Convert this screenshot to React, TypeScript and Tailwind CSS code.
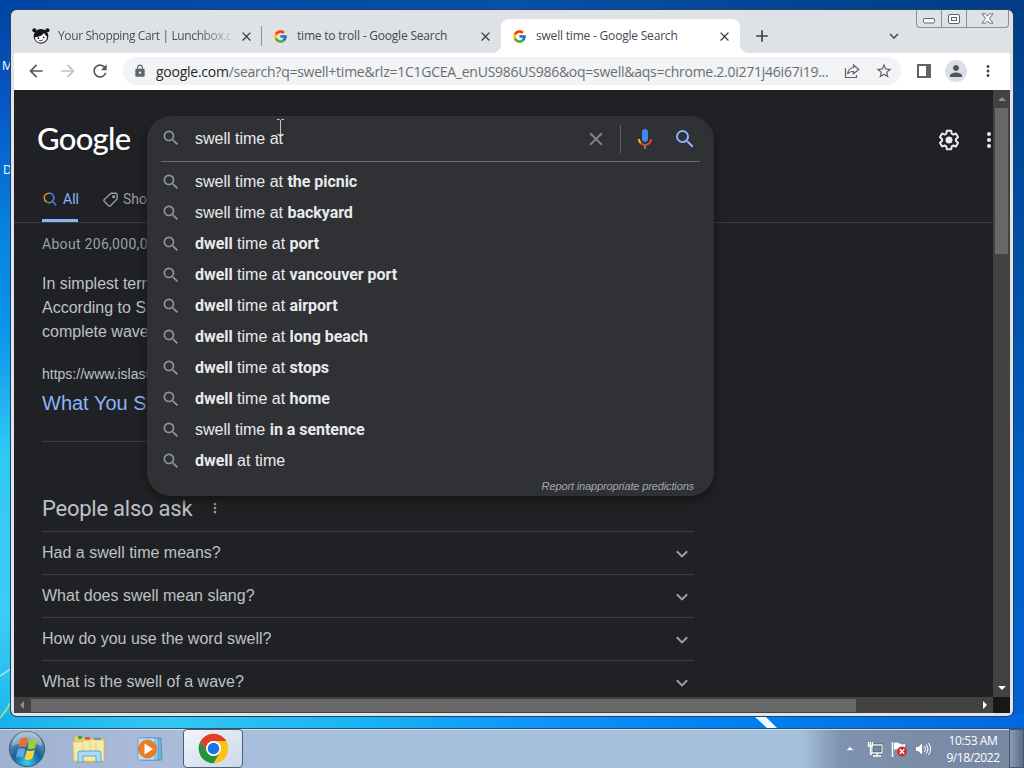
import type { ReactNode } from "react";
import { FcGoogle } from "react-icons/fc";
import {
  MdAdd,
  MdArrowBack,
  MdArrowForward,
  MdClose,
  MdKeyboardArrowDown,
  MdLock,
  MdMoreVert,
  MdPerson,
  MdRefresh,
  MdSearch,
  MdStarBorder,
} from "react-icons/md";

const suggestions: ReactNode[] = [
  <>swell time at <B>the picnic</B></>,
  <>swell time at <B>backyard</B></>,
  <><B>dwell</B> time at <B>port</B></>,
  <><B>dwell</B> time at <B>vancouver port</B></>,
  <><B>dwell</B> time at <B>airport</B></>,
  <><B>dwell</B> time at <B>long beach</B></>,
  <><B>dwell</B> time at <B>stops</B></>,
  <><B>dwell</B> time at <B>home</B></>,
  <>swell time <B>in a sentence</B></>,
  <><B>dwell</B> at time</>,
];

const questions = [
  "Had a swell time means?",
  "What does swell mean slang?",
  "How do you use the word swell?",
  "What is the swell of a wave?",
];

function B({ children }: { children: ReactNode }) {
  return <b className="font-['Roboto',sans-serif] font-bold tracking-[-0.04px]">{children}</b>;
}

function LunchboxIcon() {
  return (
    <svg viewBox="0 0 18 16" className="h-4 w-[18px] shrink-0">
      <circle cx="2.4" cy="2.3" r="2.1" fill="#161616" />
      <circle cx="15.4" cy="2.3" r="2.1" fill="#161616" />
      <circle cx="9" cy="8.4" r="7.3" fill="#161616" />
      <path d="M3 9.200c4.200-.2 7.200-1.700 9-4.200 1 1.700 2.200 2.800 3 3.600.2 3.400-2.300 6-6 6-3.400 0-6-2.100-6-5.400z" fill="#fff" />
      <circle cx="6.300" cy="10.200" r=".9" fill="#161616" />
      <circle cx="11.800" cy="9.300" r=".9" fill="#161616" />
      <path d="M7 12.300q2.500 1 4.300-.6" fill="none" stroke="#161616" strokeWidth=".8" />
    </svg>
  );
}

function Tab({ icon, title, active }: { icon: ReactNode; title: ReactNode; active?: boolean }) {
  return (
    <div
      className={
        active
          ? "relative flex h-[34px] w-[239px] items-center rounded-t-lg bg-white pl-[10px] pr-2"
          : "relative flex h-[34px] w-[239px] items-center pl-[10px] pr-2"
      }
    >
      {active && (
        <>
          <span className="absolute -left-2 bottom-0 size-2 bg-[radial-gradient(circle_at_0_0,transparent_7.5px,#fff_8px)]" />
          <span className="absolute -right-2 bottom-0 size-2 bg-[radial-gradient(circle_at_100%_0,transparent_7.5px,#fff_8px)]" />
        </>
      )}
      <span className="flex w-4 shrink-0 justify-center">{icon}</span>
      <span className="ml-[9px] whitespace-nowrap text-xs tracking-[-0.2px] text-[#45494d]">{title}</span>
      <MdClose className="ml-auto size-[15px] shrink-0 text-[#3c4043]" />
    </div>
  );
}

function CaptionButtons() {
  return (
    <div className="absolute right-[4px] top-0 flex h-[18px] w-[93px] rounded-b-[4px] border border-t-0 border-[#8b8f96] text-[#5d6168]">
      <div className="flex w-[25px] items-center justify-center border-r border-[#8b8f96]">
        <svg viewBox="0 0 12 6" className="mt-1 h-[6px] w-3">
          <rect x=".5" y=".5" width="11" height="4.500" rx="1.500" fill="#fff" stroke="currentColor" />
        </svg>
      </div>
      <div className="flex w-[25px] items-center justify-center border-r border-[#8b8f96]">
        <svg viewBox="0 0 12 10" className="h-[10px] w-3">
          <rect x=".5" y=".5" width="11" height="9" rx="1.500" fill="#fff" stroke="currentColor" />
          <rect x="3.500" y="3.500" width="5" height="3" fill="none" stroke="currentColor" />
        </svg>
      </div>
      <div className="flex flex-1 items-center justify-center">
        <svg viewBox="0 0 13 11" className="h-[11px] w-[13px]">
          <path d="M1 .8h3.500l2 2.300 2-2.300H12L8.400 5.500 12 10.200H8.500l-2-2.300-2 2.300H1l3.600-4.700z" fill="#fff" stroke="currentColor" strokeWidth=".9" />
        </svg>
      </div>
    </div>
  );
}

function TabStrip() {
  return (
    <div className="relative flex h-[43px] shrink-0 items-end rounded-t-md bg-[#dee1e6] pl-3">
      <Tab
        icon={<LunchboxIcon />}
        title={
          <span className="bg-linear-to-r from-[#45494d] from-80% to-[#c3c6cb] bg-clip-text tracking-[-0.38px] text-transparent">
            Your Shopping Cart | Lunchbox.c
          </span>
        }
      />
      <span className="mb-[7px] -ml-px h-5 w-px bg-[#8e9196]" />
      <Tab icon={<FcGoogle size={15} />} title="time to troll - Google Search" />
      <Tab icon={<FcGoogle size={15} />} title="swell time - Google Search" active />
      <MdAdd className="mb-[7px] ml-3 size-5 text-[#3c4043]" />
      <MdKeyboardArrowDown className="mb-[8px] ml-auto mr-[110px] size-[18px] text-[#45494d]" />
      <CaptionButtons />
    </div>
  );
}

function Toolbar() {
  return (
    <div className="mx-[3px] flex h-[37px] shrink-0 items-center bg-white pb-px pl-3 text-[#5f6368]">
      <MdArrowBack className="size-5 text-[#55595e]" />
      <MdArrowForward className="ml-3 size-5 text-[#c0c2c5]" />
      <MdRefresh className="ml-3 size-5 text-[#55595e]" />
      <div className="ml-[13px] flex h-7 w-[778px] items-center rounded-full bg-[#f1f3f4] pl-[10px]">
        <MdLock className="size-[14px]" />
        <span className="ml-[9px] w-[674px] whitespace-nowrap text-[14px] tracking-[-0.255px] text-[#6a6e73]">
          <span className="text-[#26282b]">google.com</span>
          /search?q=swell+time&amp;rlz=1C1GCEA_enUS986US986&amp;oq=swell&amp;aqs=chrome.2.0i271j46i67i19...
        </span>
        <svg viewBox="0 0 16 16" className="ml-[14px] size-4" fill="none" stroke="currentColor" strokeWidth="1.200">
          <path d="M1.500 5v9.500h11V12M9.500 2l5.300 4.500-5.300 4.300V8.500c-2.800-.1-4.700.6-6 2.500.4-3.300 2.200-6 6-6.500z" />
        </svg>
        <MdStarBorder className="ml-[15px] size-[18px]" />
      </div>
      <svg viewBox="0 0 14 14" className="ml-4 h-[14px] w-[14px]">
        <path d="M1 1h12v12H1z" fill="none" stroke="currentColor" strokeWidth="2" />
        <path d="M9 1h4v12H9z" fill="currentColor" />
      </svg>
      <span className="ml-[14px] flex size-[22px] items-center justify-center rounded-full bg-[#d9dfe5]">
        <MdPerson className="size-[18px] text-[#50565d]" />
      </span>
      <MdMoreVert className="ml-3 size-[18px] text-[#4a4e53]" />
    </div>
  );
}

function MicIcon() {
  return (
    <svg viewBox="0 0 24 24" className="size-6">
      <path fill="#4285f4" d="m12 15c1.660 0 3-1.310 3-2.970v-7.020c0-1.660-1.340-3.010-3-3.010s-3 1.340-3 3.010v7.020c0 1.660 1.340 2.970 3 2.970z" />
      <path fill="#34a853" d="m11 18.080h2v3.920h-2z" />
      <path fill="#fbbc04" d="m7.050 16.870c-1.270-1.330-2.050-2.830-2.050-4.870h2c0 1.450.56 2.420 1.470 3.380v.32l-1.150 1.180z" />
      <path fill="#ea4335" d="m12 16.930a4.970 5.250 0 0 1-3.540-1.550l-1.410 1.490c1.260 1.340 3.020 2.130 4.950 2.130 3.870 0 6.990-2.920 6.990-7h-1.990c0 2.920-2.240 4.930-5 4.930z" />
    </svg>
  );
}

function GearIcon() {
  return (
    <svg viewBox="0 0 24 24" className="size-6" fill="#e8eaed">
      <path d="M13.850 22.250h-3.700c-.74 0-1.360-.54-1.450-1.270l-.27-1.890c-.27-.14-.53-.29-.79-.46l-1.800.72c-.7.26-1.470-.03-1.810-.65L2.200 15.530c-.35-.66-.2-1.440.36-1.880l1.530-1.190c-.01-.15-.02-.3-.02-.46 0-.15.01-.31.02-.46l-1.520-1.190c-.59-.45-.74-1.260-.37-1.880l1.850-3.190c.34-.62 1.110-.9 1.790-.63l1.810.73c.26-.17.52-.32.78-.46l.27-1.910c.09-.7.71-1.250 1.440-1.250h3.700c.74 0 1.360.54 1.450 1.270l.27 1.890c.27.14.53.29.79.46l1.800-.72c.71-.26 1.480.03 1.820.65l1.840 3.180c.36.66.2 1.440-.36 1.880l-1.520 1.190c.01.15.02.3.02.46s-.01.31-.02.46l1.520 1.190c.56.45.72 1.230.37 1.860l-1.860 3.220c-.34.62-1.110.9-1.800.63l-1.800-.72c-.26.17-.52.32-.78.46l-.27 1.910c-.1.68-.72 1.220-1.460 1.220zm-3.230-2h2.760l.37-2.550.53-.22c.44-.18.88-.44 1.340-.78l.45-.34 2.380.96 1.380-2.400-2.030-1.580.07-.56c.03-.26.06-.51.06-.78s-.03-.53-.06-.78l-.07-.56 2.030-1.580-1.390-2.400-2.390.96-.45-.35c-.42-.32-.87-.58-1.330-.77l-.52-.22-.37-2.550h-2.760l-.37 2.550-.53.21c-.44.19-.88.44-1.340.79l-.45.33-2.380-.95-1.390 2.390 2.030 1.580-.07.56a7 7 0 0 0-.06.79c0 .26.02.53.06.78l.07.56-2.030 1.580 1.380 2.400 2.390-.96.45.35c.43.33.86.58 1.330.77l.53.22.38 2.550z" />
      <circle cx="12" cy="12" r="3.500" />
    </svg>
  );
}

function SearchBox() {
  return (
    <div className="absolute left-[133px] top-[26px] flex h-[380px] w-[567px] flex-col rounded-3xl bg-[#303134] px-[14px] text-base text-[#e8eaed] shadow-[0_4px_6px_1px_#171717]">
      <div className="flex h-[46px] shrink-0 items-center border-b border-[#6b6f73] pt-px">
        <MdSearch className="-mt-[3px] size-5 text-[#8f959b]" />
        <span className="relative ml-[14px] whitespace-nowrap">
          swell time at
          {/* I-beam pointer */}
          <svg viewBox="0 0 7 16" className="absolute -right-px -top-[8px] h-4 w-[7px]" fill="none" stroke="#c5c7c9">
            <path d="M0 .5h2.500l1 1 1-1H7M3.500 1.500v13M0 15.500h2.500l1-1 1 1H7" />
          </svg>
        </span>
        <MdClose className="ml-auto size-[22px] text-[#84898f]" />
        <span className="ml-[13px] mr-[12px] h-[28px] w-px bg-[#5f6368]" />
        <MicIcon />
        <MdSearch className="ml-4 mr-[3px] size-6 text-[#8ab4f8]" />
      </div>
      <ul className="mt-1">
        {suggestions.map((s, i) => (
          <li key={i} className="flex h-[31px] items-center">
            <MdSearch className="size-5 text-[#8f959b]" />
            <span className="ml-[14px]">{s}</span>
          </li>
        ))}
      </ul>
      <span className="mr-[6px] mt-[2px] self-end text-[11px] italic leading-[16px] tracking-[-0.13px] text-[#a3a8ad]">
        Report inappropriate predictions
      </span>
    </div>
  );
}

function ResultsPage() {
  return (
    <div className="relative w-[979px] overflow-hidden bg-[#202124] font-['Liberation_Sans',sans-serif] text-[#bdc1c6]">
      <header className="flex h-[133px] flex-col border-b border-[#3c4043]">
        <div className="flex h-[94px] items-center pt-[6px]">
          <span className="-mt-[3px] ml-[23px] font-['Lato',sans-serif] text-[31px] font-medium leading-none tracking-[-0.7px] text-white">
            Google
          </span>
          <span className="ml-auto mr-[26px]"><GearIcon /></span>
          <svg viewBox="0 0 4 16" className="mr-[2px] h-4 w-1" fill="#e8eaed">
            <circle cx="2" cy="2" r="2" />
            <circle cx="2" cy="8" r="2" />
            <circle cx="2" cy="14" r="2" />
          </svg>
        </div>
        <nav className="ml-7 flex flex-1 gap-[25px]">
          <div className="flex h-[38px] w-9 items-center gap-[6px] border-b-[3px] border-[#8ab4f8] pb-[5px] text-[#8ab4f8]">
            <svg viewBox="0 0 14 14" className="ml-px h-[14px] w-[14px] shrink-0" fill="none" strokeWidth="1.500">
              <path d="M1.200 6A4.600 4.600 0 0 1 6 1.200" stroke="#e0803a" />
              <path d="M6 1.200A4.600 4.600 0 0 1 9.300 9.300" stroke="#5a7fd0" />
              <path d="M1.200 6A4.600 4.600 0 0 0 3.500 9.800" stroke="#c9a03c" />
              <path d="M3.500 9.800A4.600 4.600 0 0 0 9.300 9.300" stroke="#5d9a63" />
              <path d="M9 9l4.200 4.200" stroke="#4f7fe0" />
            </svg>
            <span className="font-['Roboto',sans-serif] text-[14px]">All</span>
          </div>
          <div className="flex h-[38px] items-center gap-[5px] pb-2 text-[#969ba1]">
            <svg viewBox="0 0 24 24" className="size-[15px]" fill="none" stroke="currentColor" strokeWidth="2.200">
              <path d="M13 2h7.500a2 2 0 0 1 2 2v7L12 22a2 2 0 0 1-3 0L2 15a2 2 0 0 1 0-3z" />
              <circle cx="17" cy="7.500" r="1.500" />
            </svg>
            <span className="font-['Roboto',sans-serif] text-[14px]">Sho</span>
          </div>
        </nav>
      </header>

      <main className="ml-7 w-[652px]">
        {/* the open suggestion panel hides everything past this column */}
        <div className="w-[105px] overflow-hidden whitespace-nowrap">
          <p className="mt-[11px] font-['Roboto',sans-serif] text-[14px] leading-5 tracking-[0.3px] text-[#9aa0a6]">About 206,000,0</p>
          <p className="mt-[18px] text-base leading-6">
            In simplest tern
            <br />
            According to S
            <br />
            complete wave
          </p>
          <p className="mt-[20px] text-[14px] leading-5">https://www.islasu</p>
          <h3 className="mt-[6px] text-xl leading-[26px] text-[#8ab4f8]">What You S</h3>
        </div>
        <hr className="mt-[25px] border-[#3c4043]" />
        <div className="mt-[53px] flex h-[36px] items-start">
          <h2 className="font-['Roboto',sans-serif] text-[22px] leading-7 tracking-[-0.24px]">People also ask</h2>
          <MdMoreVert className="ml-[15px] mt-[5px] size-4 text-[#9aa0a6]" />
        </div>
        {questions.map((q) => (
          <div key={q} className="flex h-[43px] items-center justify-between border-t border-[#3c4043] pr-[6px]">
            <span className="text-base">{q}</span>
            <svg viewBox="0 0 12 8" className="mt-px h-2 w-3" fill="none" stroke="#9aa0a6" strokeWidth="2">
              <path d="M.8 1.200L6 6.400l5.200-5.200" />
            </svg>
          </div>
        ))}
      </main>

      <SearchBox />
    </div>
  );
}

function WindowsOrb() {
  return (
    <svg viewBox="0 0 38 38" className="size-[38px]">
      <defs>
        <radialGradient id="orb" cx=".5" cy=".9" r=".9">
          <stop offset="0" stopColor="#35d0f2" />
          <stop offset=".45" stopColor="#13609a" />
          <stop offset="1" stopColor="#9db3c2" />
        </radialGradient>
      </defs>
      <circle cx="19" cy="19" r="17.500" fill="url(#orb)" stroke="#35526c" />
      <path d="M4 16a15 15 0 0 1 30 0q-15-7-30 0z" fill="#fff" opacity=".3" />
      <path d="M12.500 9q4-2.500 7.500-.5L18 17.500q-4-2-8 0z" fill="#ee6b32" />
      <path d="M21.500 9q4 2 8-.5L27 18q-4 2.500-7.500.5z" fill="#9dcc3c" />
      <path d="M9.500 19.500q4-2.500 8-.5L15 27.500q-4-1.500-7 0z" fill="#5ba8e6" />
      <path d="M19 20q4 2 8-.5L24.500 28.500q-4 2.500-8 .5z" fill="#fcd13e" />
    </svg>
  );
}

function ExplorerIcon() {
  return (
    <svg viewBox="0 0 34 30" className="h-[30px] w-[34px]">
      <path d="M2 5V2h8l2 2h20v24H3z" fill="#e8ce73" stroke="#c0a04a" strokeWidth=".7" />
      <rect x="6" y="2" width="4" height="3" fill="#3ba552" />
      <rect x="13" y="3" width="5" height="3" fill="#d7553e" />
      <rect x="22" y="4" width="7" height="3" fill="#4a8fd0" />
      <path d="M1 8h10l2-2h19v21H2z" fill="#f8eaa6" stroke="#d5bd68" strokeWidth=".7" />
      <path d="M18 8v11M24 8v11M11 9v10" stroke="#e3cf81" />
      <path d="M6 28V19q0-2 2-2h19q2 0 2 2v9h-5v-6H11v6z" fill="#a9dbf3" stroke="#58a8d3" />
    </svg>
  );
}

function PlayerIcon() {
  return (
    <svg viewBox="0 0 28 26" className="h-[26px] w-7">
      <path d="M8 2h16l1 22H8z" fill="#6fb3da" stroke="#4285ad" strokeWidth=".7" />
      <path d="M4 2h17v22H4z" fill="#9bd0ec" stroke="#4f94bd" strokeWidth=".7" />
      <path d="M1 2h17v22H1z" fill="#bfe0f2" stroke="#5b9fc6" strokeWidth=".8" />
      <circle cx="10.500" cy="13" r="9" fill="#f07c22" stroke="#c95f14" strokeWidth=".6" />
      <path d="M7.500 7.500v11l8.500-5.500z" fill="#fff" />
    </svg>
  );
}

function ChromeIcon() {
  return (
    <svg viewBox="0 0 48 48" className="size-[31px]">
      <circle cx="24" cy="24" r="23" fill="#fbc116" />
      <path d="M4.100 12.500A23 23 0 0 1 43.900 12.500H24a11.500 11.500 0 0 0-10 17.200z" fill="#e33b2e" />
      <path d="M4.100 12.500A23 23 0 0 0 24 47l10-17.300a11.500 11.500 0 0 1-20 0z" fill="#229342" />
      <circle cx="24" cy="24" r="11.500" fill="#fff" />
      <circle cx="24" cy="24" r="9" fill="#1a73e8" />
    </svg>
  );
}

function Taskbar() {
  return (
    <div className="relative mt-auto flex h-10 shrink-0 items-center border-t border-[#32506e] bg-[linear-gradient(to_right,#9eb1cf_0,#a9bbd9_150px,#a6c0dd_300px,#a6c1de_800px,#7f93b0_840px,#7788a3_970px,#7788a3_100%)] shadow-[inset_0_1px_0_#cfe2f2]">
      <span className="ml-2"><WindowsOrb /></span>
      <span className="ml-[26px]"><ExplorerIcon /></span>
      <span className="ml-[31px]"><PlayerIcon /></span>
      <div className="ml-[18px] flex h-[39px] w-[60px] items-center justify-center rounded-sm border border-[#4d6075] bg-linear-to-br from-[#f2f5fa] to-[#cbd8ea]">
        <ChromeIcon />
      </div>
      <div className="ml-auto flex items-center">
        <svg viewBox="0 0 8 5" className="h-[5px] w-2" fill="#fff"><path d="M0 4.500L4 .5l4 4z" stroke="#51637b" strokeWidth=".4" /></svg>
        <svg viewBox="0 0 16 16" className="ml-[13px] size-4">
          <path d="M5 4h10v8H5z" fill="#7588a4" stroke="#2b3b50" strokeWidth="2.600" />
          <path d="M5 4h10v8H5zM10 12v3M6 15h8M1.500 1v4h4V1M3.500 5v8H5M3.500 1v3" fill="none" stroke="#fff" strokeWidth="1.300" />
        </svg>
        <svg viewBox="0 0 16 16" className="ml-2 size-4">
          <path d="M1.500 1v15" stroke="#fff" strokeWidth="1.500" />
          <path d="M3 2q3-1 5.500.5T14 3v6q-3 .8-5.500-.5T3 9z" fill="#fff" />
          <circle cx="11" cy="10.500" r="5" fill="#d42d2a" />
          <path d="M8.800 8.300l4.400 4.400M13.200 8.300l-4.400 4.400" stroke="#fff" strokeWidth="1.500" />
        </svg>
        <svg viewBox="0 0 16 16" className="ml-2 size-4" fill="none" stroke="#fff">
          <path d="M.5 5.500h3l4-4v13l-4-4h-3z" fill="#fff" stroke="#43536a" strokeWidth=".5" />
          <path d="M9.500 5q2 3 0 6M11.500 3.500q3 4.500 0 9M13.500 2q4 6 0 12" />
        </svg>
      </div>
      <div className="ml-[13px] w-[58px] whitespace-nowrap text-center text-xs leading-[17px] tracking-[-0.4px] text-white">
        10:53 AM
        <br />
        9/18/2022
      </div>
      <span className="ml-[7px] h-full w-[15px] border border-[#46566e] bg-linear-to-r from-[#8a9cb5] to-[#5c6d88]" />
    </div>
  );
}

export default function App() {
  return (
    <div className="relative flex h-[768px] w-[1024px] flex-col overflow-hidden bg-[#0a56b4] font-['Open_Sans','Noto_Sans',sans-serif]">
      {/* wallpaper: top edge, left edge, right edge and the strip above the taskbar */}
      <div className="absolute inset-x-0 top-0 h-5 bg-linear-to-r from-[#0046a4] via-[#0650a8] to-[#013c84]" />
      <div className="absolute bottom-0 left-0 top-3 w-4 bg-[linear-gradient(to_bottom,#0046a4_0,#0757c4_90px,#0683de_220px,#0a95ec_320px,#2fc9f4_440px,#3acdf5_600px,#19b6ef_720px)]" />
      <div className="absolute bottom-0 right-0 top-3 w-4 bg-[linear-gradient(to_bottom,#003d85_0,#0050a8_260px,#0060c8_500px,#0060d0_720px)]" />
      <div className="absolute inset-x-0 top-[714px] h-4 bg-[linear-gradient(to_right,#16b0ec_0,#30c8f2_170px,#18b4f4_360px,#0e97fb_520px,#0084f5_700px,#0068df_1024px)]" />
      <svg viewBox="0 0 30 14" className="absolute left-[752px] top-[716px] h-[14px] w-[30px]">
        <path d="M2 0h11l14 14H17z" fill="#eefaff" />
      </svg>
      <svg viewBox="0 0 12 80" className="absolute left-0 top-[660px] h-20 w-3" fill="none">
        <path d="M0 16L12 8" stroke="#a7e6fa" strokeWidth="1.500" />
        <path d="M0 58Q7 50 12 40" stroke="#b8e07a" strokeWidth="1.500" />
      </svg>
      <div className="absolute left-[2px] top-[58px] text-xs text-white">M</div>
      <div className="absolute left-[3px] top-[162px] text-xs text-white">D</div>

      <div className="relative ml-[11px] mt-[10px] flex h-[706px] w-[1002px] shrink-0 flex-col rounded-md bg-[#dfe3ea] shadow-[0_0_0_1px_#24415f]">
        <TabStrip />
        <Toolbar />
        <div className="mx-[3px] flex h-[607px] shrink-0">
          <ResultsPage />
          <div className="flex w-[17px] flex-col items-center bg-[#424242]">
            <svg viewBox="0 0 8 4" className="my-[7px] h-1 w-2" fill="#8d8d8d"><path d="M0 4l4-4 4 4z" /></svg>
            <div className="h-[146px] w-[13px] bg-[#686868]" />
            <svg viewBox="0 0 8 4" className="mb-[7px] mt-auto h-1 w-2" fill="#fff"><path d="M0 0l4 4 4-4z" /></svg>
          </div>
        </div>
        <div className="mx-[3px] flex h-4 shrink-0 items-center bg-[#424242]">
          <svg viewBox="0 0 4 8" className="mx-[6px] h-2 w-1" fill="#8d8d8d"><path d="M4 0L0 4l4 4z" /></svg>
          <div className="ml-px h-[13px] w-[825px] bg-[#686868]" />
          <svg viewBox="0 0 4 8" className="ml-auto mr-[6px] h-2 w-1" fill="#fff"><path d="M0 0l4 4-4 4z" /></svg>
          <div className="h-full w-[17px] bg-[#171717]" />
        </div>
      </div>

      <Taskbar />
    </div>
  );
}
